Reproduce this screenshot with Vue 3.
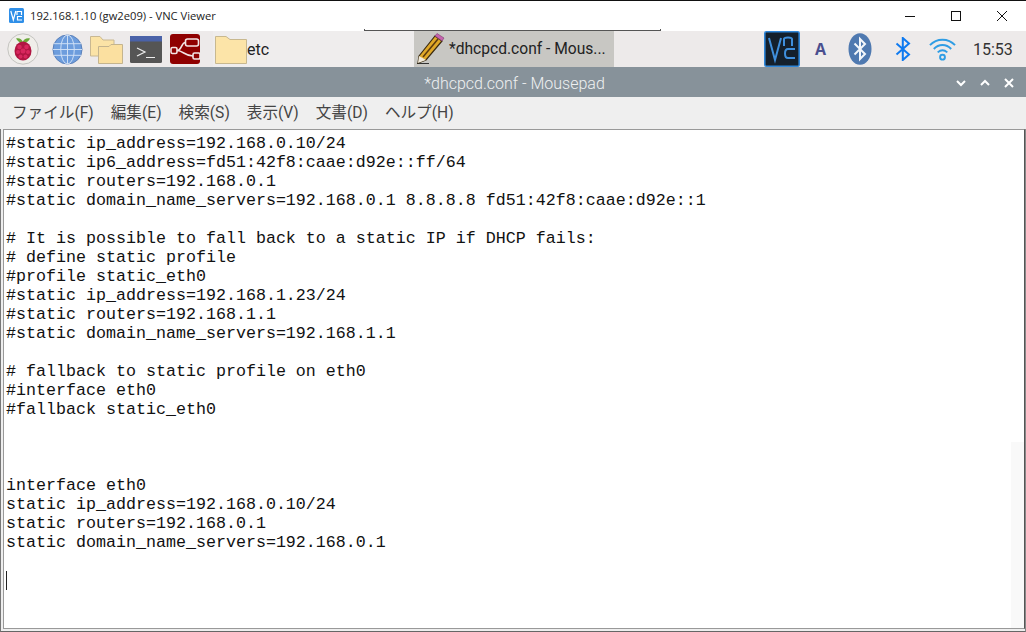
<script setup>
const menus = ['ファイル(F)', '編集(E)', '検索(S)', '表示(V)', '文書(D)', 'ヘルプ(H)']
const lines = [
  '#static ip_address=192.168.0.10/24',
  '#static ip6_address=fd51:42f8:caae:d92e::ff/64',
  '#static routers=192.168.0.1',
  '#static domain_name_servers=192.168.0.1 8.8.8.8 fd51:42f8:caae:d92e::1',
  '',
  '# It is possible to fall back to a static IP if DHCP fails:',
  '# define static profile',
  '#profile static_eth0',
  '#static ip_address=192.168.1.23/24',
  '#static routers=192.168.1.1',
  '#static domain_name_servers=192.168.1.1',
  '',
  '# fallback to static profile on eth0',
  '#interface eth0',
  '#fallback static_eth0',
  '',
  '',
  '',
  'interface eth0',
  'static ip_address=192.168.0.10/24',
  'static routers=192.168.0.1',
  'static domain_name_servers=192.168.0.1',
  ''
]
</script>

<template>
  <div class="win">
    <header class="vnc-bar">
      <svg class="vnc-logo" width="15" height="15" viewBox="0 0 15 15">
        <rect width="15" height="15" rx="1.500" fill="#2f8fe8" />
        <path d="M1.800 3 L4.300 12 L6.800 3" fill="none" stroke="#fff" stroke-width="1.200" />
        <path d="M8 7 V3.500 H12.500 V7 M13 8.500 H8.500 V12 H13" fill="none" stroke="#fff" stroke-width="1.200" />
      </svg>
      <span class="vnc-title">192.168.1.10 (gw2e09) - VNC Viewer</span>
      <div class="win-ctrl">
        <svg width="12" height="12" viewBox="0 0 12 12"><path d="M1 6.500 H11" stroke="#111" stroke-width="1" /></svg>
        <svg width="12" height="12" viewBox="0 0 12 12"><rect x="1.500" y="1.500" width="9" height="9" fill="none" stroke="#111" stroke-width="1" /></svg>
        <svg width="12" height="12" viewBox="0 0 12 12"><path d="M1 1 L11 11 M11 1 L1 11" stroke="#111" stroke-width="1" /></svg>
      </div>
    </header>

    <div class="panel">
      <div class="launch">
        <svg class="pi" width="32" height="32" viewBox="0 0 32 32">
          <circle cx="16" cy="16" r="15.200" fill="#f0eeea" stroke="#c4c4c0" />
          <path d="M15.500 10 C12 10 10 7 9 5.500 C12 4.500 15 6 15.800 9 C16.500 6 20 4.500 23 5.500 C22 8 19.500 10 15.500 10 Z" fill="#6aa83a" />
          <ellipse cx="16" cy="18" rx="8.500" ry="9.500" fill="#b01642" />
          <g fill="#d8275e">
            <circle cx="12.500" cy="14" r="2.300" /><circle cx="19.500" cy="14" r="2.300" />
            <circle cx="16" cy="18" r="2.500" /><circle cx="11" cy="19" r="2" /><circle cx="21" cy="19" r="2" />
            <circle cx="13.500" cy="23.500" r="2" /><circle cx="18.500" cy="23.500" r="2" />
          </g>
        </svg>
        <svg class="globe" width="31" height="31" viewBox="0 0 32 32">
          <circle cx="16" cy="16" r="15" fill="#6d9ddd" stroke="#5a7fb8" />
          <g fill="none" stroke="#cfe0f6" stroke-width="1">
            <ellipse cx="16" cy="16" rx="7" ry="15" />
            <path d="M16 1 V31 M2 10 H30 M2 22 H30 M1 16 H31" />
          </g>
        </svg>
        <svg class="folders" width="33" height="28" viewBox="0 0 33 28">
          <path d="M0.500 0.500 H10 L13 4 H24 V20 H0.500 Z" fill="#fbe3a6" stroke="#c9b892" />
          <path d="M8.500 10.500 H19 L21 8.500 H32.500 V27.500 H8.500 Z" fill="#fbe0a0" stroke="#c4b48e" />
        </svg>
        <svg class="term" width="32" height="27" viewBox="0 0 32 27">
          <rect width="32" height="27" rx="1.500" fill="#555" />
          <rect width="32" height="5.500" fill="#4a62a8" />
          <path d="M7 12 L15 16 L7 20 M16 21.500 H25" fill="none" stroke="#eee" stroke-width="1.200" />
        </svg>
        <svg class="red" width="30" height="30" viewBox="0 0 30 30">
          <rect width="30" height="30" rx="3" fill="#8f0000" />
          <g fill="none" stroke="#f3e4e4" stroke-width="1.600">
            <rect x="15.500" y="5" width="13" height="7" rx="2" />
            <rect x="1" y="13.500" width="6" height="6" rx="1.500" />
            <rect x="23" y="19" width="7" height="6" rx="1.500" />
            <path d="M7 16.500 C12 16.500 11 8.500 15.500 8.500 M7 16.500 C13 16.500 15 22 23 22" />
          </g>
        </svg>
      </div>

      <div class="task task-etc">
        <svg width="32" height="28" viewBox="0 0 32 28">
          <path d="M0.500 0.500 H11 L15 3.500 H31.500 V27.500 H0.500 Z" fill="#fce4a8" stroke="#c8b88f" />
        </svg>
        <span>etc</span>
      </div>

      <div class="task task-mouse">
        <div class="task-rule"></div>
        <svg width="30" height="32" viewBox="0 0 30 32">
          <path d="M1 30.500 H13" stroke="#333" stroke-width="1" />
          <path d="M3 23 L19 3 L26 8 L10 27 L2 30 Z" fill="#e0a828" stroke="#3a2a10" stroke-width="1.200" />
          <path d="M7 24 L22 6" stroke="#5a3a10" stroke-width="1.500" />
          <path d="M3 23 L10 27 L2 30 Z" fill="#f1eadc" />
          <path d="M19 3 L21 0.500 L28 5 L26 8 Z" fill="#c664ae" stroke="#7e3a70" stroke-width="0.600" />
        </svg>
        <span>*dhcpcd.conf - Mous...</span>
      </div>

      <div class="tray">
        <svg class="tray-vnc" width="36" height="36" viewBox="0 0 36 36">
          <rect x="0.800" y="0.800" width="34.400" height="34.400" rx="1.500" fill="#14202c" stroke="#2f86d8" stroke-width="1.600" />
          <path d="M5 7 L11 29 L17 7" fill="none" stroke="#3f8fdc" stroke-width="2" />
          <path d="M20 15 V8 C20 6 28 6 28 8 V15" fill="none" stroke="#3f8fdc" stroke-width="2" />
          <path d="M31 18 H24 C20 18 20 27 24 27 H31" fill="none" stroke="#3f8fdc" stroke-width="2" />
        </svg>
        <span class="tray-a">A</span>
        <svg class="bt-oval" width="24" height="32" viewBox="0 0 24 32">
          <ellipse cx="12" cy="16" rx="11.500" ry="15.800" fill="#4f79b0" />
          <path d="M6.500 10.500 L17 21 L12 26 V6 L17 11 L6.500 21.500" fill="none" stroke="#f4f7fb" stroke-width="2" />
        </svg>
        <svg class="bt" width="16" height="24" viewBox="0 0 16 24">
          <path d="M1.500 6.500 L14 17.500 L7.800 23 V1 L14 6.500 L1.500 17.500" fill="none" stroke="#0f7af0" stroke-width="2" />
        </svg>
        <svg class="wifi" width="27" height="24" viewBox="0 0 28 24">
          <g fill="none" stroke="#2f9de4" stroke-width="2">
            <path d="M1 8 C8 0.500 20 0.500 27 8" />
            <path d="M5 12 C10 6.500 18 6.500 23 12" />
            <path d="M9 15.500 C12 13 16 13 19 15.500" />
            <circle cx="14" cy="20.500" r="2.500" />
          </g>
        </svg>
        <span class="clock">15:53</span>
      </div>
    </div>

    <div class="title">
      <span class="title-text">*dhcpcd.conf - Mousepad</span>
      <div class="title-btns">
        <svg width="10" height="10" viewBox="0 0 10 10"><path d="M1 3 L5 7 L9 3" fill="none" stroke="#fff" stroke-width="2" /></svg>
        <svg width="10" height="10" viewBox="0 0 10 10"><path d="M1 7 L5 3 L9 7" fill="none" stroke="#fff" stroke-width="2" /></svg>
        <svg width="10" height="10" viewBox="0 0 10 10"><path d="M1 1 L9 9 M9 1 L1 9" fill="none" stroke="#fff" stroke-width="2" /></svg>
      </div>
    </div>

    <nav class="menu">
      <span v-for="m in menus" :key="m">{{ m }}</span>
    </nav>

    <div class="frame">
      <main class="editor">
        <div v-for="(l, i) in lines" :key="i" class="line">{{ l }}</div>
        <div class="line"><i class="caret"></i></div>
        <div class="trough"></div>
      </main>
    </div>
  </div>
</template>

<style>
html, body { margin: 0; background: #fff; }
</style>

<style scoped>
.win {
  width: 1026px;
  height: 632px;
  box-sizing: border-box;
  border-top: 1px solid #111;
  display: flex;
  flex-direction: column;
  overflow: hidden;
  font-family: Roboto, "Noto Sans CJK JP", sans-serif;
}
.vnc-bar {
  height: 30px;
  flex: none;
  display: flex;
  align-items: center;
  background: #fff;
  padding-left: 9px;
  font-family: "Open Sans", "Liberation Sans", sans-serif;
}
.vnc-logo { margin-right: 6px; margin-top: -1px; }
.vnc-title { font-size: 11.200px; color: #222; margin-top: -1px; }
.win-ctrl {
  margin-left: auto;
  display: flex;
  gap: 34px;
  padding-right: 18px;
  margin-top: -1px;
}
.panel {
  height: 36px;
  flex: none;
  display: flex;
  background: #edeaea;
  align-items: stretch;
}
.launch {
  display: flex;
  align-items: center;
  width: 213px;
  flex: none;
  position: relative;
}
.pi { margin-left: 7px; }
.globe { margin-left: 13px; }
.folders { margin-left: 7px; margin-top: 2px; }
.term { margin-left: 7px; margin-top: 1px; }
.red { margin-left: 8px; margin-top: -1px; }
.task {
  display: flex;
  align-items: center;
  font-size: 16px;
  color: #222;
}
.task-etc {
  width: 201px;
  flex: none;
  background: #efeded;
  padding-left: 2px;
  box-sizing: border-box;
  font-size: 16px;
}
.task-etc svg { margin-top: 2px; }
.task-etc span { margin-top: 1px; }
.task-mouse {
  width: 200px;
  flex: none;
  background: #c8c7c3;
  box-sizing: border-box;
  padding-left: 2px;
  gap: 3px;
  position: relative;
  font-size: 15.600px;
}
.task-rule {
  position: absolute;
  left: -50px;
  width: 297px;
  top: -2px;
  height: 2px;
  border: 1px solid #555;
  border-top: none;
  box-sizing: border-box;
}
.tray {
  display: flex;
  align-items: center;
  flex: 1;
  position: relative;
  padding-left: 150px;
}
.tray-a {
  font-family: "Open Sans", sans-serif;
  font-weight: 700;
  font-size: 16px;
  color: #4a4f8f;
  margin-left: 15px;
  width: 12px;
}
.bt-oval { margin-left: 21px; }
.bt { margin-left: 23px; margin-top: -1px; }
.wifi { margin-left: 18px; }
.clock {
  font-size: 16px;
  color: #333;
  margin-left: 17px;
}
.title {
  height: 30px;
  flex: none;
  background: #87929a;
  position: relative;
  display: flex;
  align-items: center;
  justify-content: center;
  color: #eef0f1;
  font-size: 16px;
  font-weight: 300;
}
.title-text { margin-left: 3px; margin-top: 2px; }
.title-btns {
  position: absolute;
  right: 12px;
  top: 11px;
  display: flex;
  gap: 14px;
}
.title-btns svg { display: block; }
.menu {
  height: 32px;
  flex: none;
  display: flex;
  align-items: center;
  gap: 17px;
  padding: 0 0 4px 12px;
  box-sizing: border-box;
  background: #efefef;
  font-size: 15.600px;
  color: #444;
}
.frame {
  flex: 1;
  min-height: 0;
  display: flex;
  box-sizing: border-box;
  background: #eeeeee;
  border-left: 1px solid #777;
  border-right: 1px solid #888;
  border-bottom: 1px solid #666;
  padding: 0 0 2px 2px;
}
.editor {
  flex: 1;
  min-width: 0;
  position: relative;
  background: #fff;
  box-sizing: border-box;
  border: 1px solid #999;
  border-right-color: #555;
  padding: 4px 0 0 2px;
  font-family: "Liberation Mono", monospace;
  font-size: 16.670px;
  color: #111;
  overflow: hidden;
}
.line {
  height: 19px;
  line-height: 19px;
  white-space: pre;
}
.caret {
  display: block;
  width: 1px;
  height: 19px;
  background: #222;
}
.trough {
  position: absolute;
  right: 0;
  top: 312px;
  bottom: 0;
  width: 13px;
  background: #f9f9f9;
}
</style>
